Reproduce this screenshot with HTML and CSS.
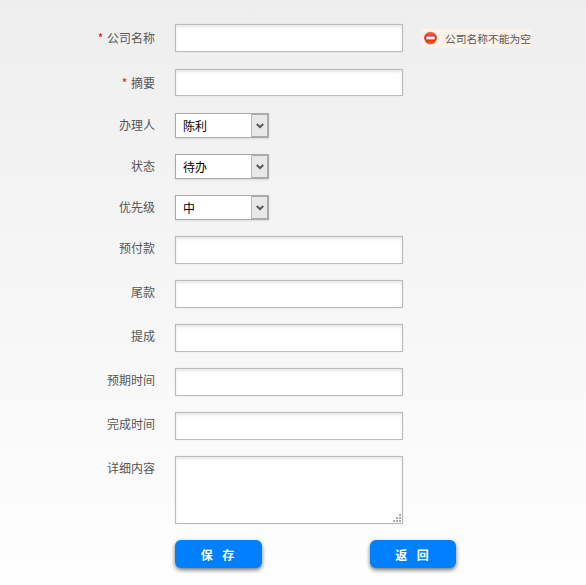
FILE: index.html
```html
<!DOCTYPE html>
<html lang="zh-CN">
<head>
  <meta charset="UTF-8" />
  <title>编辑</title>
  <link rel="stylesheet" href="styles.css">
</head>
<body>
  <form class="form">
    <div class="row row-top">
      <label class="label"><span class="star">*</span> 公司名称</label>
      <input class="text" type="text">
      <div class="error">
        <svg width="14" height="14" viewBox="0 0 14 14">
          <defs>
            <linearGradient id="err" x1="0" y1="0" x2="0" y2="1">
              <stop offset="0" stop-color="#f0705a"/>
              <stop offset="0.5" stop-color="#dd2211"/>
              <stop offset="1" stop-color="#f0601c"/>
            </linearGradient>
          </defs>
          <circle cx="7" cy="7" r="6.8" fill="url(#err)"/>
          <rect x="2.5" y="5.5" width="9" height="3" fill="#fff"/>
        </svg>
        <span>公司名称不能为空</span>
      </div>
    </div>
    <div class="row row-top">
      <label class="label"><span class="star">*</span> 摘要</label>
      <input class="text text-short" type="text">
    </div>
    <div class="row">
      <label class="label">办理人</label>
      <div class="select-wrap">
        <select class="select"><option>陈利</option></select>
        <span class="select-btn"><svg width="8" height="6" viewBox="0 0 8 6"><path d="M0.8 1 L4 4.2 L7.2 1" fill="none" stroke="#555" stroke-width="2"/></svg></span>
      </div>
    </div>
    <div class="row">
      <label class="label">状态</label>
      <div class="select-wrap">
        <select class="select"><option>待办</option></select>
        <span class="select-btn"><svg width="8" height="6" viewBox="0 0 8 6"><path d="M0.8 1 L4 4.2 L7.2 1" fill="none" stroke="#555" stroke-width="2"/></svg></span>
      </div>
    </div>
    <div class="row">
      <label class="label">优先级</label>
      <div class="select-wrap">
        <select class="select"><option>中</option></select>
        <span class="select-btn"><svg width="8" height="6" viewBox="0 0 8 6"><path d="M0.8 1 L4 4.2 L7.2 1" fill="none" stroke="#555" stroke-width="2"/></svg></span>
      </div>
    </div>
    <div class="row">
      <label class="label">预付款</label>
      <input class="text" type="text">
    </div>
    <div class="row">
      <label class="label">尾款</label>
      <input class="text" type="text">
    </div>
    <div class="row">
      <label class="label">提成</label>
      <input class="text" type="text">
    </div>
    <div class="row">
      <label class="label">预期时间</label>
      <input class="text" type="text">
    </div>
    <div class="row">
      <label class="label">完成时间</label>
      <input class="text" type="text">
    </div>
    <div class="row">
      <label class="label">详细内容</label>
      <div class="area-wrap">
        <textarea class="area"></textarea>
        <svg class="grip" width="9" height="9" viewBox="0 0 9 9" fill="#aaa">
          <rect x="7" y="0" width="2" height="2"/>
          <rect x="4" y="3" width="2" height="2"/>
          <rect x="7" y="3" width="2" height="2"/>
          <rect x="1" y="6" width="2" height="2"/>
          <rect x="4" y="6" width="2" height="2"/>
          <rect x="7" y="6" width="2" height="2"/>
        </svg>
      </div>
    </div>
    <div class="actions">
      <button class="btn" type="button">保 存</button>
      <button class="btn btn-back" type="button">返 回</button>
    </div>
  </form>
</body>
</html>
```

FILE: styles.css
```css
html, body {
  margin: 0;
  padding: 0;
}

body {
  min-height: 585px;
  background: linear-gradient(#eeeeee, #fefefe);
  font-family: "Noto Sans CJK SC", "Liberation Sans", sans-serif;
  font-size: 12px;
  color: #555;
}

.form {
  display: flex;
  flex-direction: column;
  gap: 16px;
  padding: 24px 0 17px;
}

.row {
  display: flex;
  align-items: flex-start;
}

.row-top {
  align-items: center;
  margin-bottom: 1px;
}

.label {
  width: 155px;
  margin-right: 20px;
  flex-shrink: 0;
  text-align: right;
  line-height: 24px;
}

.star {
  margin-right: 1px;
  color: #e01010;
}

.text, .area {
  box-sizing: border-box;
  width: 228px;
  height: 28px;
  margin: 0;
  padding: 0 6px;
  background: #fff;
  border: 1px solid #bbb;
  border-radius: 0;
  outline: none;
  box-shadow: inset 0 2px 3px rgba(0,0,0,0.1), 0 0 2px rgba(0,0,0,0.08);
}

.text-short {
  height: 27px;
}

.area-wrap {
  position: relative;
  height: 68px;
}

.area {
  display: block;
  height: 68px;
  resize: none;
}

.grip {
  position: absolute;
  right: 2px;
  bottom: 1px;
}

.select-wrap {
  position: relative;
  width: 94px;
  height: 25px;
}

.select {
  box-sizing: border-box;
  display: block;
  width: 100%;
  height: 100%;
  margin: 0;
  padding: 0 0 0 7px;
  appearance: none;
  background: #fff;
  border: 1px solid #aaa;
  border-radius: 0;
  font-family: inherit;
  font-size: 12px;
  color: #000;
  box-shadow: 0 1px 2px rgba(0,0,0,0.1);
}

.select-btn {
  position: absolute;
  top: 0;
  right: 0;
  box-sizing: border-box;
  width: 18px;
  height: 25px;
  display: flex;
  align-items: center;
  justify-content: center;
  background: #e8e8e8;
  border: 2px solid #aaa;
  border-left: 1px solid #bbb;
  pointer-events: none;
}

.error {
  display: flex;
  align-items: center;
  gap: 8px;
  width: 110px;
  height: 19px;
  box-sizing: border-box;
  margin-left: 18px;
  padding-left: 3px;
  background: #fdf2ea;
  font-size: 10.75px;
  white-space: nowrap;
}

.actions {
  display: flex;
  gap: 108px;
  margin-left: 175px;
}

.btn {
  width: 87px;
  height: 28px;
  padding: 0 2px 0 0;
  background: #0080ff;
  border: none;
  border-radius: 6px;
  color: #fff;
  font-family: inherit;
  font-size: 12px;
  font-weight: bold;
  word-spacing: 7px;
  box-shadow: 0 2px 4px rgba(0,0,0,0.55);
}

.btn-back {
  width: 86px;
}
```
